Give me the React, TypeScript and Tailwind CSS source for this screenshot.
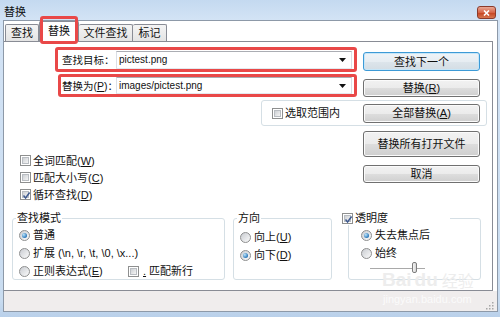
import React from "react";

const font = "font-['Liberation_Sans','Noto_Sans_CJK_SC',sans-serif]";

function Box({ checked }: { checked?: boolean }) {
  return (
    <span className="w-[11px] h-[11px] shrink-0 border border-[#8e8f8f] bg-white p-px">
      <span className="relative block w-full h-full border border-[#b9bdc2] bg-[linear-gradient(135deg,#cdd0d4,#f5f5f5)]">
        {checked && (
          <svg className="absolute -left-px -top-px" width="9" height="9" viewBox="0 0 9 9">
            <path d="M1.5 4.5 L3.6 7 L7.6 1.5" fill="none" stroke="#3f5a8f" strokeWidth="1.5" />
          </svg>
        )}
      </span>
    </span>
  );
}

function Check({ checked, children, className = "" }: { checked?: boolean; children: React.ReactNode; className?: string }) {
  return (
    <div className={`flex items-center ${className}`}>
      <Box checked={checked} />
      <span className="ml-[2px]">{children}</span>
    </div>
  );
}

function Radio({ on, children, className = "" }: { on?: boolean; children: React.ReactNode; className?: string }) {
  return (
    <div className={`flex items-center ${className}`}>
      <span className="w-[11px] h-[11px] shrink-0 rounded-full border border-[#8e8f8f] bg-[linear-gradient(135deg,#c9ccd1,#fbfbfb)] flex items-center justify-center">
        {on && <span className="w-[5px] h-[5px] rounded-full bg-[radial-gradient(circle_at_35%_35%,#bfe6fb,#1f6fb5_75%)]" />}
      </span>
      <span className="ml-[3px]">{children}</span>
    </div>
  );
}

function Btn({ children, className = "", focused }: { children: React.ReactNode; className?: string; focused?: boolean }) {
  const look = focused
    ? "border-[#3d9ad6] bg-[linear-gradient(#eff4f8,#e7edf2_50%,#dde5eb_51%,#d4dde4)] shadow-[inset_0_0_0_1px_#c6e6f8]"
    : "border-[#707070] bg-[linear-gradient(#f2f2f2,#ebebeb_50%,#dddddd_51%,#cfcfcf)] shadow-[inset_0_0_0_1px_#fbfbfb]";
  return (
    <div className={`w-[117px] shrink-0 flex items-center justify-center rounded-[3px] border ${look} ${className}`}>
      {children}
    </div>
  );
}

function Combo({ value, className = "" }: { value: string; className?: string }) {
  return (
    <div className={`flex-1 flex items-center bg-white border border-[#abadb3] border-b-[#e3e9ef] border-x-[#dbdfe6] font-['Liberation_Sans',sans-serif] text-[10px] ${className}`}>
      <span className="flex-1 pl-[2px]">{value}</span>
      <svg className="mr-[5px]" width="7" height="4" viewBox="0 0 7 4">
        <path d="M0 0 H7 L3.5 4 Z" fill="#111" />
      </svg>
    </div>
  );
}

export default function App() {
  return (
    <div className={`relative w-[500px] h-[317px] overflow-hidden whitespace-nowrap bg-[linear-gradient(#c4d9f0,#d3e3f5_20px,#c9dcf0_300px,#b9d0ea)] text-[11px] leading-[14px] text-[#111] ${font}`}>
      {/* title bar */}
      <div className="h-[20px] flex items-start justify-between">
        <span className="pl-[4px] pt-[5px]">替换</span>
        <div className="mt-[6px] mr-[4px] w-[19px] h-[13px] rounded-[3px] border border-[#8b3a2b] bg-[linear-gradient(#e9a896,#d66446_50%,#c4401f_51%,#d7764f)] flex items-center justify-center">
          <svg width="7" height="6" viewBox="0 0 7 6">
            <path d="M1 0.5 L6 5.5 M6 0.5 L1 5.5" stroke="#fff" strokeWidth="1.6" />
          </svg>
        </div>
      </div>

      {/* client */}
      <div className="ml-[3px] w-[495px] h-[292px] border border-[#8d99a8] bg-white flex flex-col">
        {/* tabs */}
        <div className="h-[20px] flex items-end pl-[1px]">
          <div className="w-[34px] h-[17px] border border-b-0 border-[#898c95] rounded-t-[2px] bg-[linear-gradient(#f4f4f4,#e4e4e4)] flex items-center justify-center">查找</div>
          <div className="relative z-10 -mb-px w-[40px] h-[21px] border border-b-0 border-[#898c95] rounded-t-[2px] bg-white flex items-center justify-center pb-[2px]">
            替换
            <div className="absolute left-0 -top-[6px] w-[38px] h-[28px] border-[3px] border-[#e94848] rounded-[3px]" />
          </div>
          <div className="w-[54px] h-[17px] border border-b-0 border-l-0 border-[#898c95] rounded-t-[2px] bg-[linear-gradient(#f4f4f4,#e4e4e4)] flex items-center justify-center">文件查找</div>
          <div className="w-[34px] h-[17px] border border-b-0 border-l-0 border-[#898c95] rounded-t-[2px] bg-[linear-gradient(#f4f4f4,#e4e4e4)] flex items-center justify-center">标记</div>
        </div>

        {/* panel */}
        <div className="w-[489px] h-[250px] border-t border-r border-b border-[#898c95] flex flex-col">
          <div className="flex mt-[5px] h-[25px]">
            <div className="ml-[51px] w-[302px] h-[25px] border-[3px] border-[#e94848] rounded-[3px] flex items-center pl-[4px] pr-[2px]">
              <span className="w-[54px] shrink-0 text-[10.5px]">查找目标：</span>
              <Combo value="pictest.png" className="h-[18px]" />
            </div>
            <Btn focused className="ml-[6px] mt-[5px] h-[19px]">查找下一个</Btn>
          </div>

          <div className="flex mt-[2px] h-[23px]">
            <div className="ml-[54px] w-[299px] h-[23px] border-[3px] border-[#e94848] rounded-[3px] flex items-center pl-[1px] pr-[2px]">
              <span className="w-[54px] shrink-0 text-[10.5px]">替换为(<u>P</u>)：</span>
              <Combo value="images/pictest.png" className="h-[17px]" />
            </div>
            <Btn className="ml-[6px] mt-[5px] h-[18px]">替换(<u>R</u>)</Btn>
          </div>

          <div className="mt-[3px] ml-[257px] w-[226px] h-[26px] border border-[#d5dfe5] rounded-[3px] flex items-center justify-between pl-[10px] pr-[6px]">
            <Check>选取范围内</Check>
            <Btn className="h-[19px]">全部替换(<u>A</u>)</Btn>
          </div>

          <div className="flex h-[85px]">
            <div className="w-[359px] pl-[16px] pt-[26px] flex flex-col">
              <Check className="h-[17px]">全词匹配(<u>W</u>)</Check>
              <Check className="h-[17px]">匹配大小写(<u>C</u>)</Check>
              <Check checked className="h-[17px]">循环查找(<u>D</u>)</Check>
            </div>
            <div className="flex flex-col">
              <Btn className="mt-[5px] h-[26px]">替换所有打开文件</Btn>
              <Btn className="mt-[8px] h-[18px]">取消</Btn>
            </div>
          </div>

          <div className="flex items-start pl-[8px]">
            <fieldset className="w-[213px] h-[69px] border border-[#d5dfe5] rounded-[3px]">
              <legend className="ml-[3px] px-[1px]">查找模式</legend>
              <div className="pl-[6px] pt-[1px] flex flex-col">
                <Radio on className="h-[18px]">普通</Radio>
                <Radio className="h-[18px]">扩展 (\n, \r, \t, \0, \x...)</Radio>
                <div className="flex items-center h-[18px]">
                  <Radio className="w-[109px]">正则表达式(<u>E</u>)</Radio>
                  <Check><span className="ml-[2px]"><u>.</u> 匹配新行</span></Check>
                </div>
              </div>
            </fieldset>

            <fieldset className="ml-[8px] w-[99px] h-[69px] border border-[#d5dfe5] rounded-[3px]">
              <legend className="ml-[3px] px-[1px]">方向</legend>
              <div className="pl-[6px] pt-[3px] flex flex-col">
                <Radio className="h-[18px]">向上(<u>U</u>)</Radio>
                <Radio on className="h-[18px]">向下(<u>D</u>)</Radio>
              </div>
            </fieldset>

            <fieldset className="ml-[16px] w-[133px] h-[69px] border border-[#d5dfe5] rounded-[3px]">
              <legend className="-ml-[7px] w-[108px] bg-white">
                <Check checked>透明度</Check>
              </legend>
              <div className="pl-[12px] pt-[1px] flex flex-col">
                <Radio on className="h-[18px]">失去焦点后</Radio>
                <Radio className="h-[18px]">始终</Radio>
                <div className="relative ml-[9px] w-[55px] h-[12px] flex items-center">
                  <div className="w-full h-px bg-[#a9a9a9]" />
                  <div className="absolute left-[42px] top-0 w-[5px] h-[11px] rounded-[2px] border border-[#7d7d7d] bg-[linear-gradient(90deg,#f4f4f4,#d6d6d6)]" />
                </div>
              </div>
            </fieldset>
          </div>
        </div>

        {/* status strip */}
        <div className="flex-1 bg-[#f0eded] flex justify-end items-end pr-[3px] pb-[1px]">
          <svg width="8" height="8" viewBox="0 0 8 8">
            <rect x="6" y="0" width="1.5" height="1.5" fill="#a7a7a7" />
            <rect x="3" y="3" width="1.5" height="1.5" fill="#a7a7a7" />
            <rect x="6" y="3" width="1.5" height="1.5" fill="#a7a7a7" />
            <rect x="0" y="6" width="1.5" height="1.5" fill="#a7a7a7" />
            <rect x="3" y="6" width="1.5" height="1.5" fill="#a7a7a7" />
            <rect x="6" y="6" width="1.5" height="1.5" fill="#a7a7a7" />
          </svg>
        </div>
      </div>

      {/* watermark */}
      <div className="absolute left-[382px] top-[270px] flex items-end text-[#ededed] font-['Liberation_Sans',sans-serif] font-bold text-[19px] leading-[20px] pointer-events-none">
        <span>Bai</span>
        <span className="ml-[3px]">du</span>
        <span className="ml-[4px] font-['Noto_Sans_CJK_SC',sans-serif] font-normal text-[16px]">经验</span>
      </div>
      <div className="absolute left-[383px] top-[293px] text-[#fbfbfb] font-['Liberation_Sans',sans-serif] text-[11px] leading-[12px] pointer-events-none">
        jingyan.baidu.com
      </div>
    </div>
  );
}
